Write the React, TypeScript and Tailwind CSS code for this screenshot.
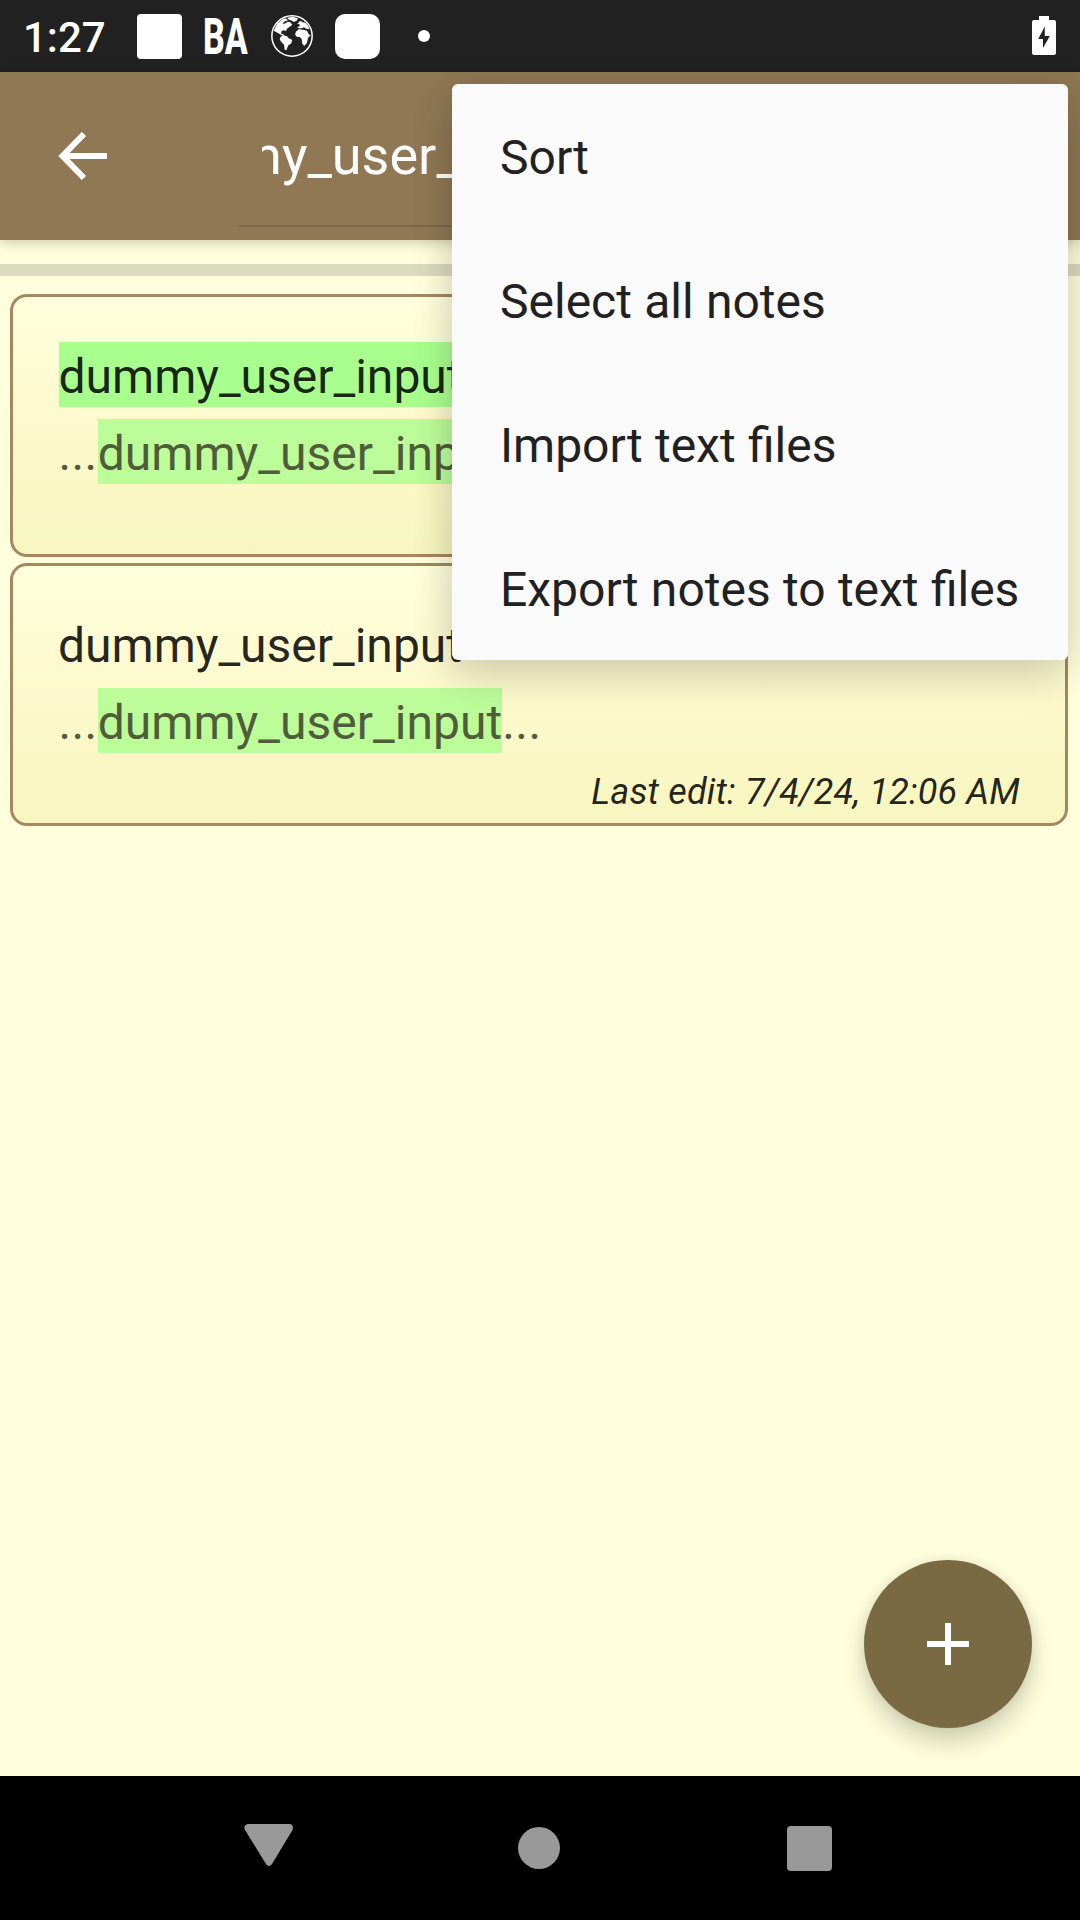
const menuItems = ['Sort', 'Select all notes', 'Import text files', 'Export notes to text files'];

function GlobeIcon() {
  return (
    <svg width="42" height="42" viewBox="0 0 126 126" fill="white">
      <circle cx="63" cy="63" r="60.5" fill="none" stroke="white" strokeWidth="4.5" />
      <path d="M8 47 L19 25 L36 12 L44 10 L51 16 L39 20 L35 27 L44 25 L50 20 L58 22 L64 29 L55 36 L48 41 L45 48 L39 46 L31 49 L31 57 L37 58 L41 64 L32 61 L22 55 Z" />
      <path d="M48 8 L66 5 L81 10 L77 17 L68 21 L63 17 L54 14 Z" />
      <path d="M29 65 L37 61 L48 64 L53 70 L64 75 L60 86 L52 91 L46 106 L41 104 L39 89 L30 80 L26 72 Z" />
      <path d="M79 26 L88 17 L95 22 L104 23 L110 31 L116 43 L106 41 L99 37 L92 40 L82 40 L79 36 L87 33 L85 28 Z" />
      <path d="M75 50 L83 43 L96 44 L108 47 L113 58 L119 61 L111 69 L108 83 L100 93 L94 86 L92 72 L86 66 L77 65 L72 58 Z" />
    </svg>
  );
}

function StatusBar() {
  return (
    <header className="flex h-[72px] shrink-0 items-center justify-between bg-[#212121] pr-6 pl-[23px] text-white">
      <div className="flex items-center">
        <span className="w-[114px] pt-[3px] text-[42px] leading-[72px] font-medium">1:27</span>
        <span className="size-[45px] rounded-[4px] bg-white" />
        <span className="ml-[21px] inline-block w-[68px] origin-left scale-x-[0.68] pt-px text-[50px] leading-[72px] font-extrabold">BA</span>
        <GlobeIcon />
        <span className="ml-[22px] size-[45px] rounded-[10px] bg-white" />
        <span className="ml-[38px] size-3 rounded-full bg-white" />
      </div>
      <svg width="24" height="40" viewBox="0 0 24 40" fill="white">
        <path d="M7 0h10v4h5a2 2 0 0 1 2 2v31a2 2 0 0 1-2 2H2a2 2 0 0 1-2-2V6a2 2 0 0 1 2-2h5z" />
        <path d="M12.8 10.5v9.5h5L11 32v-9H6.2z" fill="#212121" />
      </svg>
    </header>
  );
}

function Toolbar() {
  return (
    <div className="relative z-10 flex h-[168px] shrink-0 bg-[#917854] shadow-[0_3px_12px_rgba(0,0,0,0.2)]">
      <div className="flex w-[239px] items-center pl-[58px]">
        <svg width="49" height="48" viewBox="0 0 49 48" fill="none" stroke="white" strokeWidth="6">
          <path d="M26 2 L4.5 24 L26 46 M4 24H49" />
        </svg>
      </div>
      <div className="mr-24 mb-[13px] flex flex-1 flex-col border-b-2 border-[#7f6748] pl-[23px]">
        <div className="overflow-hidden text-[54px] leading-[168px] whitespace-nowrap text-white">
          <span className="-ml-[135px]">dummy_user_input</span>
        </div>
      </div>
    </div>
  );
}

function NoteCard({ titleMarked }: { titleMarked: boolean }) {
  return (
    <article className="flex h-[263px] flex-col items-start rounded-[17px] border-[3px] border-[#a5885f] bg-linear-to-b from-[#ffffdd] via-[#fdf9cc] to-[#f8f6bf] px-[45px] pt-[45px] text-[48px] text-black/87">
      <h2 className={titleMarked ? 'ml-[0.5px] h-[65px] bg-[#a9ff8d] pt-[2px] leading-[65px]' : 'h-[65px] pt-[2px] leading-[65px]'}>
        dummy_user_input
      </h2>
      <p className="mt-3 ml-[0.5px] flex h-[65px] leading-[69px] text-[#54593f]">
        <span className="tracking-[0.4px]">...</span>
        <mark className="bg-[#bcfd9a] tracking-[0.04px] text-[#505c3a]">dummy_user_input</mark>
        <span className="tracking-[0.4px]">...</span>
      </p>
      <time className="mt-[18px] self-end text-[36px] leading-[42px] tracking-[0.18px] italic">Last edit: 7/4/24, 12:06 AM</time>
    </article>
  );
}

function NavigationBar() {
  return (
    <nav className="flex h-36 shrink-0 items-center justify-between bg-black pr-[248px] pl-[244px]">
      <svg width="50" height="48" viewBox="0 0 50 48" fill="#999">
        <path d="M4 0H46Q50 1 48.5 6L28 40Q25 44 22 40L1 6Q-1 1 4 0Z" />
      </svg>
      <span className="mr-[4px] size-[42px] rounded-full bg-[#999]" />
      <span className="size-[45px] rounded-[4px] bg-[#999]" />
    </nav>
  );
}

export default function App() {
  return (
    <div className="relative flex h-[1920px] w-[1080px] flex-col overflow-hidden bg-[#ffffdd] font-[Roboto,sans-serif]">
      <StatusBar />
      <Toolbar />
      <main className="flex-1">
        <div className="mt-6 h-3 bg-[#dadbbf]" />
        <div className="mt-[18px] mr-3 ml-[10px] flex flex-col gap-[6px]">
          <NoteCard titleMarked />
          <NoteCard titleMarked={false} />
        </div>
      </main>
      <NavigationBar />

      <button className="absolute right-12 bottom-48 flex size-[168px] items-center justify-center rounded-full bg-[#7a6a43] shadow-[0_14px_26px_rgba(0,0,0,0.19),0_0_12px_rgba(0,0,0,0.08)]">
        <svg width="42" height="42" viewBox="0 0 42 42" fill="white">
          <path d="M18 0h6v18h18v6H24v18h-6V24H0v-6h18z" />
        </svg>
      </button>

      <div className="pointer-events-none absolute inset-x-0 top-[72px] bottom-36 z-20 overflow-hidden">
        <ul className="absolute top-3 right-3 w-[616px] rounded-[6px] bg-[#fafafa] text-[48px] text-[#212121] shadow-[0_18px_42px_rgba(0,0,0,0.11),0_4px_44px_rgba(0,0,0,0.12)]">
          {menuItems.map((item) => (
            <li key={item} className="h-36 pl-12 leading-[148px] whitespace-nowrap [word-spacing:0.4px]">{item}</li>
          ))}
        </ul>
      </div>
    </div>
  );
}
